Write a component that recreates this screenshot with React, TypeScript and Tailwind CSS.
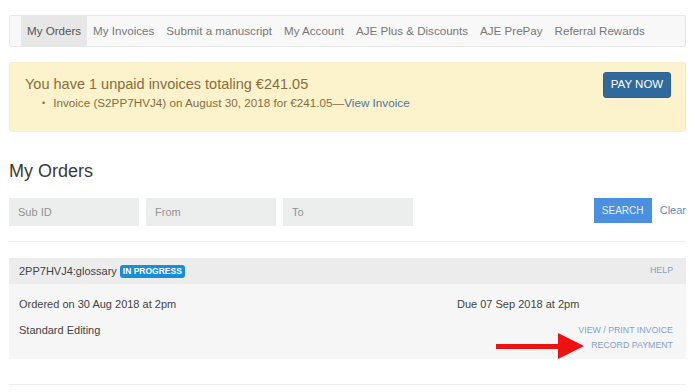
import React from 'react';

const tabs = [
  'My Orders',
  'My Invoices',
  'Submit a manuscript',
  'My Account',
  'AJE Plus & Discounts',
  'AJE PrePay',
  'Referral Rewards',
];

export default function App() {
  return (
    <div className="w-[695px] h-[392px] overflow-hidden bg-white px-[9px] pt-[15px] font-['Liberation_Sans',Arial,sans-serif]">
      {/* Top tabs */}
      <nav className="flex h-[32px] items-stretch rounded-[2px] border border-[#e7e7e7] bg-[#f8f8f8] pl-[11px]">
        {tabs.map((tab, i) => (
          <a
            key={tab}
            className={`flex items-center px-[6px] text-[11.6px] ${
              i === 0 ? 'bg-[#e7e7e7] text-[#555]' : 'text-[#777]'
            }`}
          >
            {tab}
          </a>
        ))}
      </nav>

      {/* Unpaid invoices alert */}
      <div className="mt-[15px] flex h-[70px] items-start justify-between rounded-[3px] border border-[#faebcc] bg-[#fcf2cc] pl-[15px] pr-[14px] pt-[9px]">
        <div className="pt-[2px] text-[#8a6d3b]">
          <div className="text-[14.5px] leading-[20px]">You have 1 unpaid invoices totaling €241.05</div>
          <div className="mt-[1px] flex items-center text-[11.7px] leading-[16px]">
            <span className="ml-[17px] mr-[8px] text-[9px]">•</span>
            <span>Invoice (S2PP7HVJ4) on August 30, 2018 for €241.05—</span>
            <a className="text-[#51759f]">View Invoice</a>
          </div>
        </div>
        <button className="flex h-[26px] w-[68px] items-center justify-center rounded-[3px] border border-[#2e6192] bg-[#30699c] text-[11.5px] text-white">
          PAY NOW
        </button>
      </div>

      {/* Heading */}
      <h1 className="mt-[27px] text-[18px] leading-[24px] text-[#3a3a3a]">My Orders</h1>

      {/* Filters */}
      <div className="mt-[15px] flex items-start">
        <div className="flex gap-[7px]">
          {['Sub ID', 'From', 'To'].map((p) => (
            <div
              key={p}
              className="flex h-[28px] w-[130px] items-center bg-[#eceeed] pl-[9px] text-[11px] text-[#929292]"
            >
              {p}
            </div>
          ))}
        </div>
        <div className="ml-auto flex items-center">
          <button className="flex h-[25px] w-[58px] items-center justify-center bg-[#4a8fe0] text-[10px] text-[#e8f1fc]">
            SEARCH
          </button>
          <a className="ml-[8px] text-[11px] text-[#5f8dc4]">Clear</a>
        </div>
      </div>

      <div className="mt-[15px] border-t border-[#eeeeee]" />

      {/* Order card */}
      <div className="mt-[16px]">
        <div className="flex h-[26px] items-center justify-between bg-[#ececec] pl-[10px] pr-[13px]">
          <div className="flex items-center text-[11px] text-[#444]">
            <span>2PP7HVJ4:glossary</span>
            <span className="ml-[3px] flex h-[13px] items-center rounded-[3px] bg-[#1a8dd8] px-[3px] text-[8.5px] font-bold text-white">
              IN PROGRESS
            </span>
          </div>
          <a className="text-[8.8px] text-[#7fa1d2]">HELP</a>
        </div>
        <div className="relative h-[75px] bg-[#f6f6f6] pl-[10px] pr-[13px] pt-[13px]">
          <div className="grid grid-cols-[438px_1fr] text-[11px] leading-[14px] text-[#444]">
            <span>Ordered on 30 Aug 2018 at 2pm</span>
            <span>Due 07 Sep 2018 at 2pm</span>
          </div>
          <div className="mt-[12px] flex items-start justify-between">
            <span className="text-[11px] leading-[14px] text-[#444]">Standard Editing</span>
            <div className="flex flex-col items-end text-[8.8px] leading-[15px] text-[#7fa1d2]">
              <a>VIEW / PRINT INVOICE</a>
              <a>RECORD PAYMENT</a>
            </div>
          </div>
          {/* annotation arrow */}
          <svg
            className="absolute left-[486px] top-[48px]"
            width="90"
            height="28"
            viewBox="0 0 90 28"
          >
            <rect x="1" y="12" width="63" height="5" fill="#ee1111" />
            <polygon points="63,1 89,14 63,27" fill="#ee1111" />
          </svg>
        </div>
      </div>

      <div className="mt-[25px] border-t border-[#eeeeee]" />
    </div>
  );
}
